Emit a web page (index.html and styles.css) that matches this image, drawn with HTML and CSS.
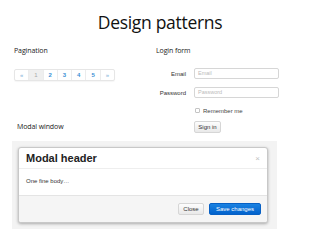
FILE: index.html
```html
<!DOCTYPE html>
<html lang="en">
<head>
    <meta charset="UTF-8">
    <title>Design patterns</title>
    <link rel="stylesheet" href="styles.css">
</head>
<body>
    <h1 class="title">Design patterns</h1>

    <div class="row">
        <div class="col col-left">
            <h2 class="label">Pagination</h2>
            <ul class="pager">
                <li class="arrow">&laquo;</li>
                <li class="active">1</li>
                <li>2</li>
                <li>3</li>
                <li>4</li>
                <li>5</li>
                <li class="arrow">&raquo;</li>
            </ul>
            <h2 class="label modal-label">Modal window</h2>
        </div>

        <div class="col col-right">
            <h2 class="label">Login form</h2>
            <form class="login">
                <div class="field">
                    <label for="email">Email</label>
                    <div class="input" id="email">Email</div>
                </div>
                <div class="field">
                    <label for="password">Password</label>
                    <div class="input" id="password">Password</div>
                </div>
                <div class="remember"><span class="check"></span>Remember me</div>
                <div class="btn signin">Sign in</div>
            </form>
        </div>
    </div>

    <div class="backdrop">
        <div class="modal">
            <div class="modal-header">
                <h3>Modal header</h3>
                <span class="close">&times;</span>
            </div>
            <div class="modal-body">One fine body…</div>
            <div class="modal-footer">
                <div class="btn">Close</div>
                <div class="btn primary">Save changes</div>
            </div>
        </div>
    </div>
</body>
</html>
```
FILE: styles.css
```css
body { margin: 0; background: #fff; font-family: "Liberation Sans", Arial, sans-serif; color: #333; }
.title { margin: 0; padding-top: 12px; font-family: "Open Sans", sans-serif; font-size: 17.5px; line-height: 20px; font-weight: normal; letter-spacing: -0.3px; text-align: center; color: #111; }

.row { display: flex; margin-top: 14px; }
.col-left { width: 142px; padding-left: 14px; }
.col-right { flex: 1; }
.label { margin: 0; font-family: "Open Sans", sans-serif; font-size: 7px; line-height: 10px; font-weight: normal; letter-spacing: -0.1px; color: #222; }
.modal-label { margin-top: 41px; padding-left: 3px; }

/* pagination */
.pager { display: flex; width: 101px; height: 12px; margin: 13px 0 0; padding: 0; list-style: none; border: 1px solid #e6e6e6; border-radius: 2px; box-sizing: border-box; box-shadow: 0 1px 1px rgba(0,0,0,0.04); }
.pager li { flex: 1; font-size: 6px; line-height: 10px; text-align: center; color: #3b8fd4; border-left: 1px solid #ececec; font-weight: bold; }
.pager li:first-child { border-left: none; }
.pager .arrow { color: #9bbfe0; }
.pager .active { background: #efefef; color: #aaa; font-weight: normal; }

/* login form */
.login { margin-top: 12px; }
.field { display: flex; align-items: center; gap: 8px; margin-bottom: 8px; }
.field label { width: 30px; font-size: 6px; text-align: right; color: #333; }
.input { width: 85px; height: 11px; box-sizing: border-box; border: 1px solid #d6d6d6; border-radius: 2px; padding-left: 3px; font-size: 5.5px; line-height: 9px; color: #bbb; }
.remember { display: flex; align-items: center; margin: 2px 0 0 39px; height: 9px; font-size: 6px; color: #444; }
.check { width: 5px; height: 5px; border: 1px solid #c4c4c4; border-radius: 1px; margin-right: 3px; box-sizing: border-box; }
.btn { display: inline-block; height: 12px; box-sizing: border-box; padding: 0 4px; font-size: 6px; line-height: 10px; color: #333; border: 1px solid #d6d6d6; border-radius: 2px; background: linear-gradient(#fdfdfd, #e9e9e9); }
.signin { margin: 1px 0 0 38px; width: 27px; text-align: center; padding: 0; }

/* modal */
.backdrop { margin: 8px 0 0 12px; width: 265px; height: 88px; padding: 6px 9px 6px 6px; box-sizing: border-box; background: #f3f3f3; }
.modal { height: 76px; box-sizing: border-box; background: #fff; border: 1px solid #c8c8c8; border-radius: 3px; box-shadow: 0 1px 3px rgba(0,0,0,0.3); overflow: hidden; }
.modal-header { display: flex; justify-content: space-between; align-items: center; height: 20px; padding: 0 7px; border-bottom: 1px solid #eee; }
.modal-header h3 { margin: 0; font-size: 11px; line-height: 20px; color: #222; }
.close { font-size: 8px; color: #c0c0c0; }
.modal-body { height: 26px; box-sizing: border-box; padding: 8px 7px 0; font-size: 6px; line-height: 8px; color: #333; }
.modal-footer { display: flex; justify-content: flex-end; gap: 5px; height: 27px; box-sizing: border-box; padding: 7px 6px 0; background: #f5f5f5; border-top: 1px solid #e4e4e4; }
.modal-footer .btn { width: 26px; text-align: center; padding: 0; }
.modal-footer .primary { width: 52px; color: #fff; border-color: #0760c4; background: linear-gradient(#1a82e2, #0262cc); }
```
